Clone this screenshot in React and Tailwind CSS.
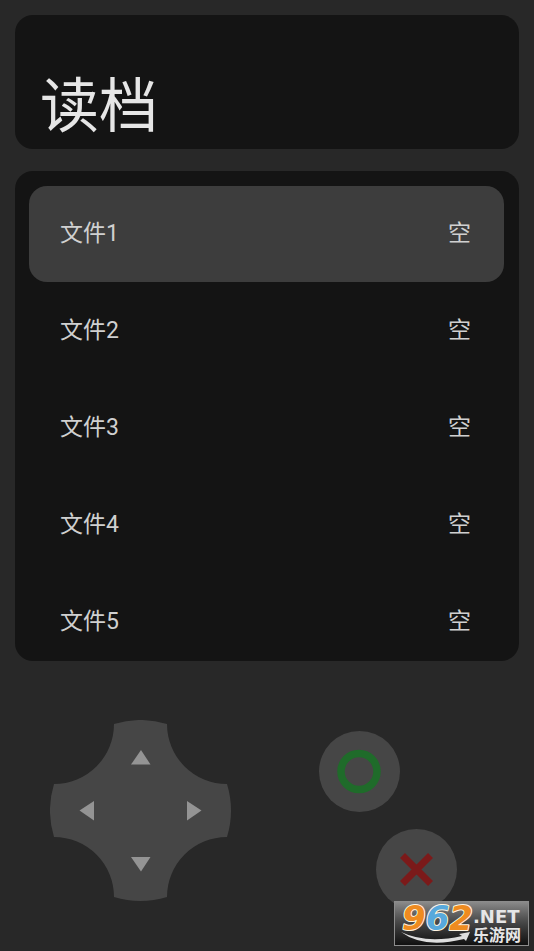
const files = [1, 2, 3, 4, 5];

function Arrow({ label, points, className }) {
  return (
    <button type="button" aria-label={label} className={`grid place-items-center ${className}`}>
      <svg viewBox="0 0 20 20" className="size-5 fill-[#949494]" aria-hidden="true">
        <polygon points={points} />
      </svg>
    </button>
  );
}

function DirectionPad() {
  return (
    <div className="relative size-[182px]">
      <svg viewBox="0 0 182 182" className="absolute inset-0 size-full" aria-hidden="true">
        <path
          fill="#464646"
          d="M64 4 A91 91 0 0 1 117 4 A60 60 0 0 0 177 64 A91 91 0 0 1 177 117 A60 60 0 0 0 117 177 A91 91 0 0 1 64 177 A60 60 0 0 0 4 117 A91 91 0 0 1 4 64 A60 60 0 0 0 64 4Z"
        />
      </svg>
      <div className="relative grid size-full grid-cols-3 grid-rows-3 p-2.5">
        <Arrow label="上" points="10,3 19.5,17.5 0,17.5" className="col-start-2 row-start-1" />
        <Arrow label="左" points="2.5,9.5 17,0 17,19.5" className="col-start-1 row-start-2" />
        <Arrow label="右" points="16.5,9.5 2,0 2,19.5" className="col-start-3 row-start-2" />
        <Arrow label="下" points="10,16.5 19.5,2 0,2" className="col-start-2 row-start-3" />
      </div>
    </div>
  );
}

function RoundButton({ label, className, children }) {
  return (
    <button type="button" aria-label={label} className={`size-[81px] rounded-full bg-[#464646] ${className}`}>
      <svg viewBox="0 0 81 81" className="size-full" fill="none" aria-hidden="true">
        {children}
      </svg>
    </button>
  );
}

function SiteBadge() {
  return (
    <div className="absolute right-[5px] bottom-[5px] h-[45px] w-[135px] border border-[#8c8c8c] bg-linear-to-b from-[#8a8a8a] via-[#4a4a4a] via-45% to-[#111111]">
      <svg viewBox="1 1 133 43" className="size-full overflow-visible" role="img" aria-label="962.NET 乐游网">
        <g
          fontFamily="'DejaVu Sans', sans-serif"
          fontWeight="700"
          fontStyle="italic"
          fontSize="34"
          stroke="#fff4e0"
          strokeWidth="2"
          strokeLinejoin="round"
          paintOrder="stroke"
        >
          <text x="8" y="29">
            <tspan fill="#ee8b20">9</tspan>
            <tspan fill="#58a9dc">6</tspan>
            <tspan fill="#ee8b20">2</tspan>
          </text>
        </g>
        <path d="M7 31 Q32 43 68 35 L65 33 L76 31 L72 40 L70 38 Q30 48 7 31Z" fill="#dedede" />
        <text x="79" y="22" fill="#e6e6e6" fontFamily="'DejaVu Sans', sans-serif" fontWeight="700" fontSize="18">
          .NET
        </text>
        <text x="79" y="40" fill="#e6e6e6" fontFamily="'Noto Sans CJK SC', sans-serif" fontWeight="700" fontSize="16">
          乐游网
        </text>
      </svg>
    </div>
  );
}

export default function App() {
  return (
    <main className="relative flex min-h-screen flex-col bg-[#282828] px-[15px] pt-[15px] font-[Roboto,'Noto_Sans_CJK_SC',sans-serif]">
      <header className="rounded-[18px] bg-[#141414] px-[25px] pt-14 pb-1.5">
        <h1 className="text-[59px] leading-[72px] text-[#e6e6e6]">读档</h1>
      </header>

      <ul className="mt-[22px] flex h-[490px] flex-col gap-px overflow-hidden rounded-[18px] bg-[#141414] pt-[15px] pr-[15px] pl-[14px]">
        {files.map((n) => (
          <li key={n}>
            <button
              type="button"
              className={`flex h-24 w-full items-center justify-between rounded-[18px] pr-[33px] pl-[31px] text-[23px] leading-8 text-[#d0d0d0] ${n === 1 ? "bg-[#3d3d3d]" : ""}`}
            >
              <span>文件{n}</span>
              <span>空</span>
            </button>
          </li>
        ))}
      </ul>

      <section className="flex items-start justify-between pt-[59px] pr-[62px] pb-10 pl-[35px]">
        <DirectionPad />
        <div className="flex w-[138px] flex-col gap-[17px] pt-[11px]">
          <RoundButton label="确定" className="self-start">
            <circle cx="40" cy="40.5" r="18" stroke="#1f6b2a" strokeWidth="7.5" />
          </RoundButton>
          <RoundButton label="取消" className="self-end">
            <path d="M26.5 26.5 L54.5 54.5 M54.5 26.5 L26.5 54.5" stroke="#7b1a1a" strokeWidth="7" />
          </RoundButton>
        </div>
      </section>

      <SiteBadge />
    </main>
  );
}
